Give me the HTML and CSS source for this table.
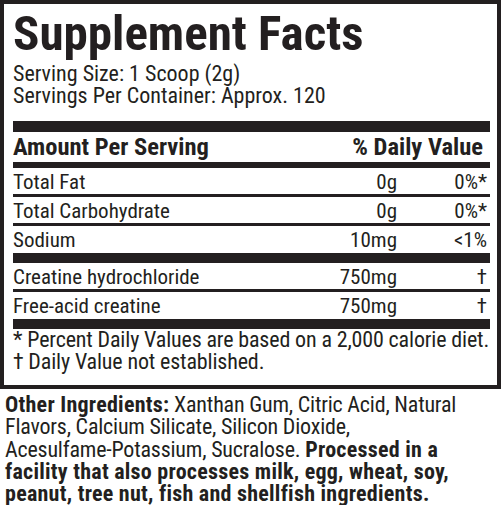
FILE: index.html
```html
<!DOCTYPE html>
<html lang="en">

<head>
  <meta charset="UTF-8">
  <meta name="viewport" content="width=device-width, initial-scale=1.0">
  <title>Supplement Facts</title>
  <link rel="stylesheet" href="styles.css">
</head>

<body>
  <div class="label">
    <h1 class="title">Supplement Facts</h1>
    <p class="serving">Serving Size: 1 Scoop (2g)<br>Servings Per Container: Approx. 120</p>

    <div class="facts">
      <div class="row head">
        <span>Amount Per Serving</span>
        <span class="dv">% Daily Value</span>
      </div>
      <div class="row">
        <span>Total Fat</span>
        <span class="amt">0g</span>
        <span class="pct">0%*</span>
      </div>
      <div class="row">
        <span>Total Carbohydrate</span>
        <span class="amt">0g</span>
        <span class="pct">0%*</span>
      </div>
      <div class="row end">
        <span>Sodium</span>
        <span class="amt">10mg</span>
        <span class="pct">&lt;1%</span>
      </div>
      <div class="row">
        <span>Creatine hydrochloride</span>
        <span class="amt">750mg</span>
        <span class="pct">&dagger;</span>
      </div>
      <div class="row end">
        <span>Free-acid creatine</span>
        <span class="amt">750mg</span>
        <span class="pct">&dagger;</span>
      </div>
    </div>

    <p class="notes">* Percent Daily Values are based on a 2,000 calorie diet.<br>&dagger; Daily Value not established.</p>
  </div>

  <p class="ingredients"><b>Other Ingredients:</b> Xanthan Gum, Citric Acid, Natural<br>Flavors, Calcium Silicate, Silicon Dioxide,<br>Acesulfame-Potassium, Sucralose. <b>Processed in a<br>facility that also processes milk, egg, wheat, soy,<br>peanut, tree nut, fish and shellfish ingredients.</b></p>
</body>

</html>
```

FILE: styles.css
```css
body {
  margin: 0;
  font-family: Roboto, "Liberation Sans", sans-serif;
  font-stretch: 75%;
  color: #231f20;
  background: #fff;
}

.label {
  width: 501px;
  box-sizing: border-box;
  border: 4px solid #231f20;
  padding: 5px 7px 12px 9px;
}

.title {
  margin: 0;
  font-size: 49px;
  line-height: 50px;
  font-weight: bold;
}

.serving {
  margin: 4px 0 0;
  font-size: 22px;
  line-height: 22px;
}

.facts {
  margin-top: 14px;
  border-top: 11px solid #231f20;
}

.row {
  display: grid;
  grid-template-columns: 1fr 90px 93px;
  padding-top: 2px;
  font-size: 21px;
  line-height: 24px;
  border-bottom: 3px solid #231f20;
}

.row.end {
  padding-bottom: 1px;
  border-bottom-width: 10px;
}

.row .amt,
.row .pct {
  text-align: right;
}

.row .pct {
  padding-right: 3px;
}

.row.head {
  grid-template-columns: 1fr auto;
  padding-top: 0;
  font-size: 24.5px;
  font-weight: bold;
  line-height: 30px;
  border-bottom-width: 6px;
}

.row.head .dv {
  padding-right: 7px;
}

.notes {
  margin: 0;
  font-size: 22px;
  line-height: 22px;
  letter-spacing: -0.15px;
  white-space: nowrap;
}

.ingredients {
  margin: 5px 0 0;
  padding-left: 5px;
  font-size: 22px;
  line-height: 22.3px;
  letter-spacing: -0.2px;
  white-space: nowrap;
}

.ingredients b {
  letter-spacing: 0.25px;
}
```
